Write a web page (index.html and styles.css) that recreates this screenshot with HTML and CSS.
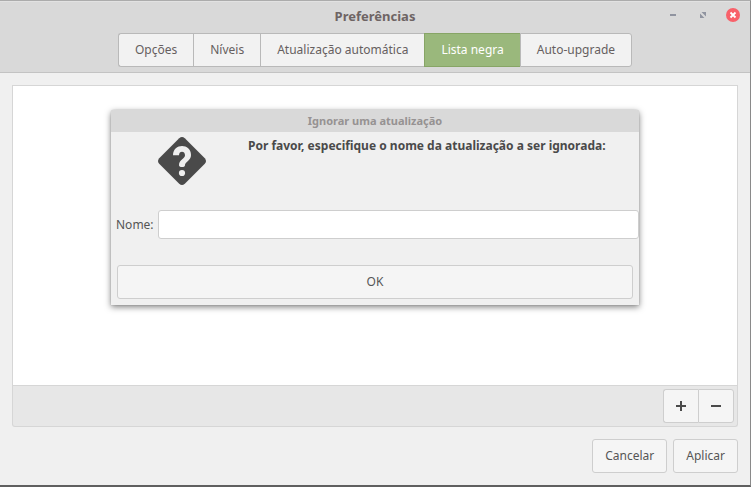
FILE: index.html
```html
<!DOCTYPE html>
<html lang="pt">
<head>
<meta charset="utf-8">
<title>Preferências</title>
<link rel="stylesheet" href="styles.css">
</head>
<body>
<main class="window">
  <header class="header">
    <div class="titlebar">
      <h1 class="title">Preferências</h1>
      <div class="controls">
        <button class="control" aria-label="Minimizar"><svg width="14" height="14" viewBox="0 0 14 14"><path d="M4 6h6v2H4z" fill="#9094a0"/></svg></button>
        <button class="control" aria-label="Maximizar"><svg width="14" height="14" viewBox="0 0 14 14"><path d="M5.5 4H10v4.500zM4 5.500V10h4.500z" fill="#9094a0"/></svg></button>
        <button class="control" aria-label="Fechar"><svg width="14" height="14" viewBox="0 0 14 14"><circle cx="7" cy="7" r="7" fill="#f8616a"/><path d="M4.500 4.500l5 5m0-5l-5 5" stroke="#fff" stroke-width="1.800"/></svg></button>
      </div>
    </div>
    <nav class="tabs">
      <button class="tab">Opções</button>
      <button class="tab">Níveis</button>
      <button class="tab">Atualização automática</button>
      <button class="tab tab-active">Lista negra</button>
      <button class="tab">Auto-upgrade</button>
    </nav>
  </header>
  <section class="content">
    <div class="list"></div>
    <div class="toolbar">
      <button class="tool" aria-label="Adicionar"><svg width="10" height="10" viewBox="0 0 10 10"><path d="M4 0h2v4h4v2H6v4H4V6H0V4h4z" fill="#4a4a4a"/></svg></button>
      <button class="tool" aria-label="Remover"><svg width="10" height="10" viewBox="0 0 10 10"><path d="M0 4h10v2H0z" fill="#4a4a4a"/></svg></button>
    </div>
    <footer class="actions">
      <button class="button">Cancelar</button>
      <button class="button">Aplicar</button>
    </footer>
  </section>
  <form class="dialog" role="dialog" aria-labelledby="dialog-title">
    <h2 class="dialog-title" id="dialog-title">Ignorar uma atualização</h2>
    <div class="message">
      <svg class="question" width="48" height="48" viewBox="0 0 48 48">
        <path d="M21.2 1.2Q24-1.2 26.8 1.2L46.8 21.2Q49.2 24 46.8 26.8L26.8 46.8Q24 49.2 21.2 46.8L1.200 26.8Q-1.200 24 1.200 21.2Z" fill="#4a4a4a"/>
        <path d="M15 18.200H21C21 13.700 27 13.700 27 18.200C27 22 21 22.500 21 28Q21 30 24 30Q27 30 27 28C27 25 33 23.500 33 18C33 6 15 6 15 18.200Z" fill="#efefef"/>
        <circle cx="24" cy="36" r="3.100" fill="#efefef"/>
      </svg>
      <p class="prompt">Por favor, especifique o nome da atualização a ser ignorada:</p>
    </div>
    <div class="field">
      <label for="name">Nome:</label>
      <input class="entry" id="name" type="text">
    </div>
    <button class="button button-ok" type="button">OK</button>
  </form>
</main>
</body>
</html>
```
FILE: styles.css
```css
* {
  box-sizing: border-box;
}

body {
  margin: 0;
  background: #5f5f5f;
  color: #555;
  font: 12px/18px "Noto Sans", sans-serif;
}

button,
input {
  margin: 0;
  color: inherit;
  font: inherit;
}

.window {
  position: relative;
  display: flex;
  flex-direction: column;
  min-height: 100vh;
  border: solid #5f5f5f;
  border-width: 1px 1px 2px 0;
  border-top-color: #acacac;
  border-right-color: #8a8a8a;
  background: #f0f0f0;
}

.header {
  padding-bottom: 5px;
  border-bottom: 1px solid #c3c3c3;
  background: #d9d9d9;
  box-shadow: inset 0 1px #e2e2e2;
}

.titlebar {
  display: grid;
  grid-template-columns: 1fr auto 1fr;
  align-items: center;
  height: 32px;
  padding: 0 10px 4px;
}

.title {
  grid-column: 2;
  margin: 0;
  padding-top: 2px;
  color: #6e6464;
  font-size: 13px;
  line-height: 18px;
}

.controls {
  display: flex;
  justify-content: flex-end;
  gap: 16px;
}

.control {
  width: 14px;
  height: 14px;
  padding: 0;
  border: 0;
  background: none;
}

.control svg,
.tool svg {
  display: block;
}

.tabs {
  display: flex;
  justify-content: center;
}

.tab {
  height: 34px;
  padding: 0 16px;
  border: 1px solid #b9b9b9;
  border-right-width: 0;
  background: #f2f2f2;
  color: #665f5f;
}

.tab:first-child {
  border-radius: 3px 0 0 3px;
}

.tab:last-child {
  border-right-width: 1px;
  border-radius: 0 3px 3px 0;
}

.tab-active {
  border-color: #87a566;
  background: #9ab87c;
  color: #fff;
}

.content {
  display: flex;
  flex: 1;
  flex-direction: column;
  padding: 12px;
}

.list {
  flex: 1;
  border: 1px solid #d6d6d6;
  background: #fff;
}

.toolbar {
  display: flex;
  justify-content: flex-end;
  padding: 3px;
  border: 1px solid #d6d6d6;
  border-top: 0;
  border-radius: 0 0 3px 3px;
  background: #e7e7e7;
}

.tool {
  display: grid;
  place-items: center;
  width: 36px;
  height: 34px;
  padding: 0;
  border: 1px solid #cecece;
  border-radius: 0 3px 3px 0;
  background: #f5f5f5;
}

.tool:first-child {
  width: 35px;
  border-right: 0;
  border-radius: 3px 0 0 3px;
}

.actions {
  display: flex;
  justify-content: flex-end;
  gap: 6px;
  margin-top: 12px;
}

.button {
  height: 34px;
  padding: 0 12px;
  border: 1px solid #cecece;
  border-radius: 3px;
  background: #f5f5f5;
}

.dialog {
  position: absolute;
  top: 109px;
  right: 111px;
  left: 111px;
  display: flex;
  flex-direction: column;
  padding-bottom: 6px;
  border-radius: 3px 3px 0 0;
  background: #f0f0f0;
  box-shadow: 0 2px 6px rgba(0, 0, 0, 0.5), 0 0 1px rgba(0, 0, 0, 0.4);
}

.dialog-title {
  margin: 0;
  padding: 2px 0;
  border-radius: 3px 3px 0 0;
  background: #d9d9d9;
  color: #969292;
  font-size: 11px;
  line-height: 18px;
  text-align: center;
}

.message {
  display: grid;
  grid-template-columns: 130px 1fr;
  column-gap: 1px;
  padding: 5px 6px 25px;
}

.question {
  justify-self: center;
}

.prompt {
  margin: 0;
  color: #4a4a4a;
  font-weight: 700;
}

.field {
  display: flex;
  align-items: center;
  gap: 4px;
  padding-left: 5px;
}

.entry {
  flex: 1;
  min-width: 0;
  height: 29px;
  padding: 0 8px;
  border: 1px solid #cecece;
  border-radius: 3px;
  background: #fff;
}

.button-ok {
  margin: 26px 6px 0;
}
```
